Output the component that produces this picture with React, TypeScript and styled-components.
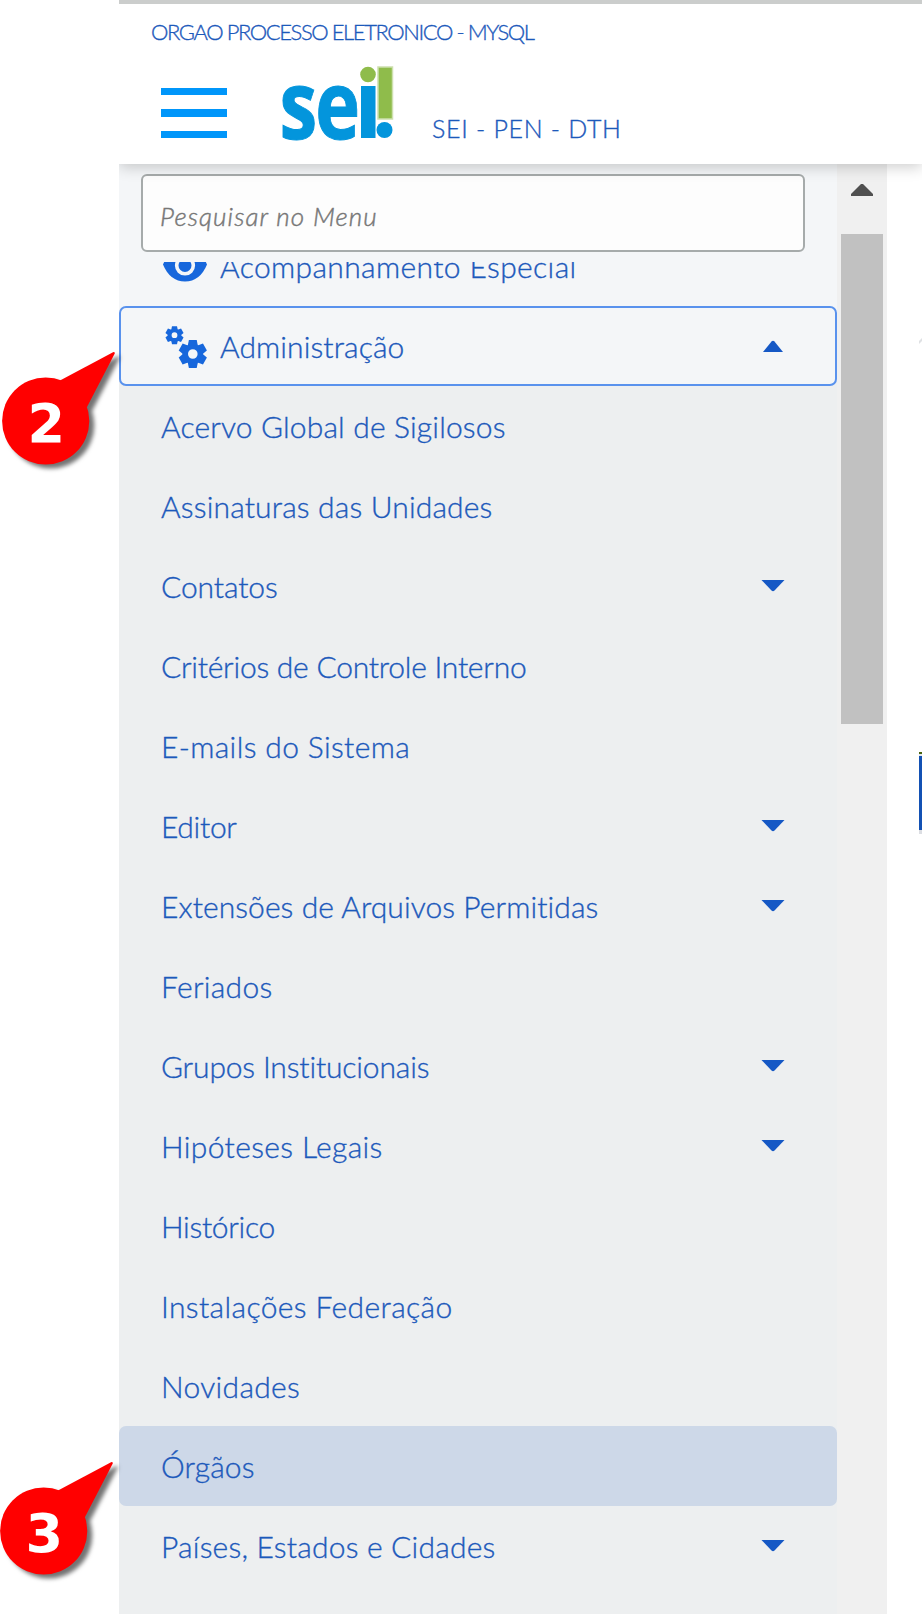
import React from 'react';
import styled, { createGlobalStyle } from 'styled-components';

const GlobalStyle = createGlobalStyle`
  * { box-sizing: border-box; }
  body { margin: 0; background: #fff; }
`;

const Page = styled.div`
  position: relative;
  display: flex;
  width: 922px;
  height: 1614px;
  padding-left: 119px;
  overflow: hidden;
  background: #fff;
  font-family: Lato, "Open Sans", sans-serif;
  font-weight: 300;
  color: #1c59bb;
  -webkit-text-stroke: 0.35px currentColor;
`;

const AppFrame = styled.div`
  display: flex;
  flex-direction: column;
  flex: 1;
  min-width: 0;
  overflow: hidden;
`;

const Header = styled.header`
  position: relative;
  z-index: 1;
  flex: none;
  height: 164px;
  padding: 14px 0 0 31px;
  border-top: 4px solid #cbcdcc;
  background: #fff;
  box-shadow: 0 3px 14px rgba(0, 0, 0, 0.2);
`;

const OrgName = styled.div`
  padding-left: 1px;
  font-size: 22px;
  line-height: 28px;
  letter-spacing: -1.43px;
  white-space: nowrap;
`;

const BrandRow = styled.div`
  display: flex;
  align-items: flex-start;
  padding: 16px 0 0 11px;
`;

const MenuButton = styled.button`
  display: flex;
  flex-direction: column;
  gap: 14px;
  width: 66px;
  margin: 26px 53px 0 0;
  padding: 0;
  border: 0;
  background: none;
`;

const MenuBar = styled.span`
  height: 7.4px;
  background: #0096fa;
`;

const Logo = styled.svg`
  display: block;
  flex: none;
  width: 120px;
  height: 82px;
  overflow: visible;
  stroke: none;
  -webkit-text-stroke: 0;
`;

const SystemName = styled.div`
  margin: 51px 0 0 32px;
  font-size: 25px;
  line-height: 30px;
  letter-spacing: 0.7px;
  white-space: nowrap;
`;

const Body = styled.div`
  display: flex;
  flex: 1;
  min-height: 0;
`;

const Sidebar = styled.nav`
  display: flex;
  flex-direction: column;
  flex: none;
  width: 718px;
  background: #edeff0;
`;

const SearchArea = styled.div`
  flex: none;
  height: 98px;
  padding: 10px 32px 10px 22px;
  background: #f4f6f8;
`;

const SearchInput = styled.input`
  display: block;
  width: 100%;
  height: 78px;
  padding: 6px 16px 0 17px;
  border: 2px solid #a6abab;
  border-radius: 6px;
  background: #fdfdfd;
  font: italic 300 26px Lato, "Open Sans", sans-serif;
  letter-spacing: 1.1px;
  -webkit-text-stroke: 0.45px #777;
  &::placeholder {
    color: #777;
    opacity: 1;
  }
`;

const Viewport = styled.div`
  flex: 1;
  min-height: 0;
  overflow: hidden;
`;

const ScrolledList = styled.div`
  margin-top: -36px;
`;

const Row = styled.div<{ $top?: boolean; $open?: boolean; $selected?: boolean }>`
  display: flex;
  align-items: center;
  height: 80px;
  padding: 0 ${(p) => (p.$top ? 50 : 52)}px 0 42px;
  border: 2px solid ${(p) => (p.$open ? '#5992ed' : 'transparent')};
  border-width: ${(p) => (p.$top ? 2 : 0)}px;
  border-radius: ${(p) => (p.$open || p.$selected ? 7 : 0)}px;
  background: ${(p) => (p.$top ? '#f4f6f8' : p.$selected ? '#cdd8e8' : 'transparent')};
`;

const Opened = styled.div`
  background: linear-gradient(#f4f6f8 50%, #edeff0 50%);
`;

const IconSlot = styled.span`
  display: flex;
  width: 57px;
  color: #1767dc;
`;

const Label = styled.span<{ $tracking: number }>`
  flex: 1;
  font-size: 30px;
  line-height: 36px;
  letter-spacing: ${(p) => p.$tracking}px;
  white-space: nowrap;
`;

const Caret = styled.svg`
  flex: none;
  width: 24px;
  height: 12px;
  fill: #1558c5;
`;

const ScrollTrack = styled.div`
  display: flex;
  flex-direction: column;
  align-items: center;
  flex: none;
  width: 50px;
  padding-top: 20px;
  background: #f0f0f0;
`;

const ScrollArrow = styled.svg`
  width: 22px;
  height: 12px;
  fill: #505050;
`;

const ScrollThumb = styled.div`
  width: 42px;
  height: 490px;
  margin-top: 38px;
  background: #c1c1c1;
`;

const Content = styled.main`
  display: flex;
  flex-direction: column;
  align-items: flex-end;
  flex: 1;
  padding-top: 174px;
`;

const CornerMark = styled.svg`
  width: 3px;
  height: 6px;
`;

const ActionEdge = styled.div`
  width: 3px;
  height: 82px;
  margin-top: 408px;
  border-top: 2px solid #4a6410;
  border-bottom: 4px solid #dcdee3;
  background: linear-gradient(#e4e8ea 2px, #1351b4 2px);
`;

const Callout = styled.svg<{ $x: number; $y: number }>`
  position: absolute;
  z-index: 2;
  left: ${(p) => p.$x}px;
  top: ${(p) => p.$y}px;
  width: 128px;
  height: 132px;
  overflow: visible;
  filter: drop-shadow(5px 4px 2px rgba(0, 0, 0, 0.55));
  -webkit-text-stroke: 0;
`;

const CalloutNumber = styled.text`
  font: bold 54px "DejaVu Sans", sans-serif;
  fill: #fff;
`;

const Gear = ({ cx, cy, r, hole }: { cx: number; cy: number; r: number; hole: number }) => {
  const body = r * 0.74;
  return (
    <g transform={`translate(${cx} ${cy})`} fill="currentColor">
      <circle r={(body + hole) / 2} fill="none" stroke="currentColor" strokeWidth={body - hole} />
      {[0, 60, 120, 180, 240, 300].map((a) => (
        <path
          key={a}
          transform={`rotate(${a})`}
          d={`M${-r * 0.36} ${-body * 0.82}L${-r * 0.28} ${-r}H${r * 0.28}L${r * 0.36} ${-body * 0.82}Z`}
        />
      ))}
    </g>
  );
};

const GearsIcon = () => (
  <svg width="44" height="44" viewBox="0 0 44 44">
    <Gear cx={11.5} cy={11.2} r={9} hole={2.9} />
    <Gear cx={29.8} cy={30} r={14} hole={4.8} />
  </svg>
);

const EyeIcon = () => (
  <svg width="44" height="32" viewBox="0 0 44 32">
    <path d="M0 14.5Q7 -2 22 -2T44 14.5Q37 31.5 22 31.5T0 14.5Z" fill="currentColor" />
    <circle cx="22" cy="15.5" r="8.3" fill="currentColor" stroke="#f4f6f8" strokeWidth="3.6" />
  </svg>
);

const SeiLogo = () => (
  <Logo viewBox="0 0 120 82">
    <text
      transform="translate(-0.5 77) scale(0.79 1)"
      fontFamily="Open Sans"
      fontWeight="700"
      fontSize="96"
      fill="#0395dc"
      stroke="#0395dc"
      strokeWidth="1"
      textLength="102"
      lengthAdjust="spacing"
    >
      se
    </text>
    <rect x="81" y="24" width="14.5" height="52" fill="#0395dc" />
    <circle cx="88" cy="12.5" r="7.8" fill="#8fbc4b" />
    <rect x="98" y="5" width="14.5" height="52" fill="#8fbc4b" stroke="#cde0ae" strokeWidth="1.5" />
    <circle cx="104.5" cy="68" r="8" fill="#0395dc" />
  </Logo>
);

const CaretIcon = ({ up }: { up?: boolean }) => (
  <Caret viewBox="0 0 24 12">
    <path d={up ? 'M2 12L10.5 1.5Q12 0 13.5 1.5L22 12Z' : 'M0.5 0H23.5L13.5 10.6Q12 12 10.5 10.6Z'} />
  </Caret>
);

type Item = { label: string; tracking: number; expandable?: boolean; selected?: boolean };

const items: Item[] = [
  { label: 'Acervo Global de Sigilosos', tracking: 0.16 },
  { label: 'Assinaturas das Unidades', tracking: 0.16 },
  { label: 'Contatos', tracking: -0.1, expandable: true },
  { label: 'Critérios de Controle Interno', tracking: -0.24 },
  { label: 'E-mails do Sistema', tracking: 0.36 },
  { label: 'Editor', tracking: -0.3, expandable: true },
  { label: 'Extensões de Arquivos Permitidas', tracking: 0.08, expandable: true },
  { label: 'Feriados', tracking: 0.3 },
  { label: 'Grupos Institucionais', tracking: -0.16, expandable: true },
  { label: 'Hipóteses Legais', tracking: 0.36, expandable: true },
  { label: 'Histórico', tracking: -0.3 },
  { label: 'Instalações Federação', tracking: 0.38 },
  { label: 'Novidades', tracking: 0.32 },
  { label: 'Órgãos', tracking: 0.15, selected: true },
  { label: 'Países, Estados e Cidades', tracking: 0.2, expandable: true },
];

const StepCallout = ({ x, y, step }: { x: number; y: number; step: number }) => (
  <Callout $x={x} $y={y} viewBox="0 0 128 132">
    <circle cx="43.7" cy="69" r="43.6" fill="#f00" />
    <path d="M58 28.5L111.5 0Q113.5 0 112.5 2L85 55L60 60Z" fill="#f00" />
    <CalloutNumber x="25.5" y="90">{step}</CalloutNumber>
  </Callout>
);

export default function App() {
  return (
    <Page>
      <GlobalStyle />
      <AppFrame>
        <Header>
          <OrgName>ORGAO PROCESSO ELETRONICO - MYSQL</OrgName>
          <BrandRow>
            <MenuButton aria-label="Menu">
              <MenuBar />
              <MenuBar />
              <MenuBar />
            </MenuButton>
            <SeiLogo />
            <SystemName>SEI - PEN - DTH</SystemName>
          </BrandRow>
        </Header>
        <Body>
          <Sidebar>
            <SearchArea>
              <SearchInput placeholder="Pesquisar no Menu" />
            </SearchArea>
            <Viewport>
              <ScrolledList>
                <Row $top>
                  <IconSlot>
                    <EyeIcon />
                  </IconSlot>
                  <Label $tracking={0.38}>Acompanhamento Especial</Label>
                </Row>
                <Opened>
                  <Row $top $open>
                    <IconSlot>
                      <GearsIcon />
                    </IconSlot>
                    <Label $tracking={0.1}>Administração</Label>
                    <CaretIcon up />
                  </Row>
                </Opened>
                {items.map((item) => (
                  <Row key={item.label} $selected={item.selected}>
                    <Label $tracking={item.tracking}>{item.label}</Label>
                    {item.expandable && <CaretIcon />}
                  </Row>
                ))}
              </ScrolledList>
            </Viewport>
          </Sidebar>
          <ScrollTrack>
            <ScrollArrow viewBox="0 0 22 12">
              <path d="M0 12V10L10 0H12L22 10V12Z" />
            </ScrollArrow>
            <ScrollThumb />
          </ScrollTrack>
          <Content>
            <CornerMark viewBox="0 0 3 6">
              <path d="M0 6V3L3 0V3Z" fill="#dfe1e4" />
            </CornerMark>
            <ActionEdge />
          </Content>
        </Body>
      </AppFrame>
      <StepCallout x={2} y={352} step={2} />
      <StepCallout x={0} y={1462} step={3} />
    </Page>
  );
}
